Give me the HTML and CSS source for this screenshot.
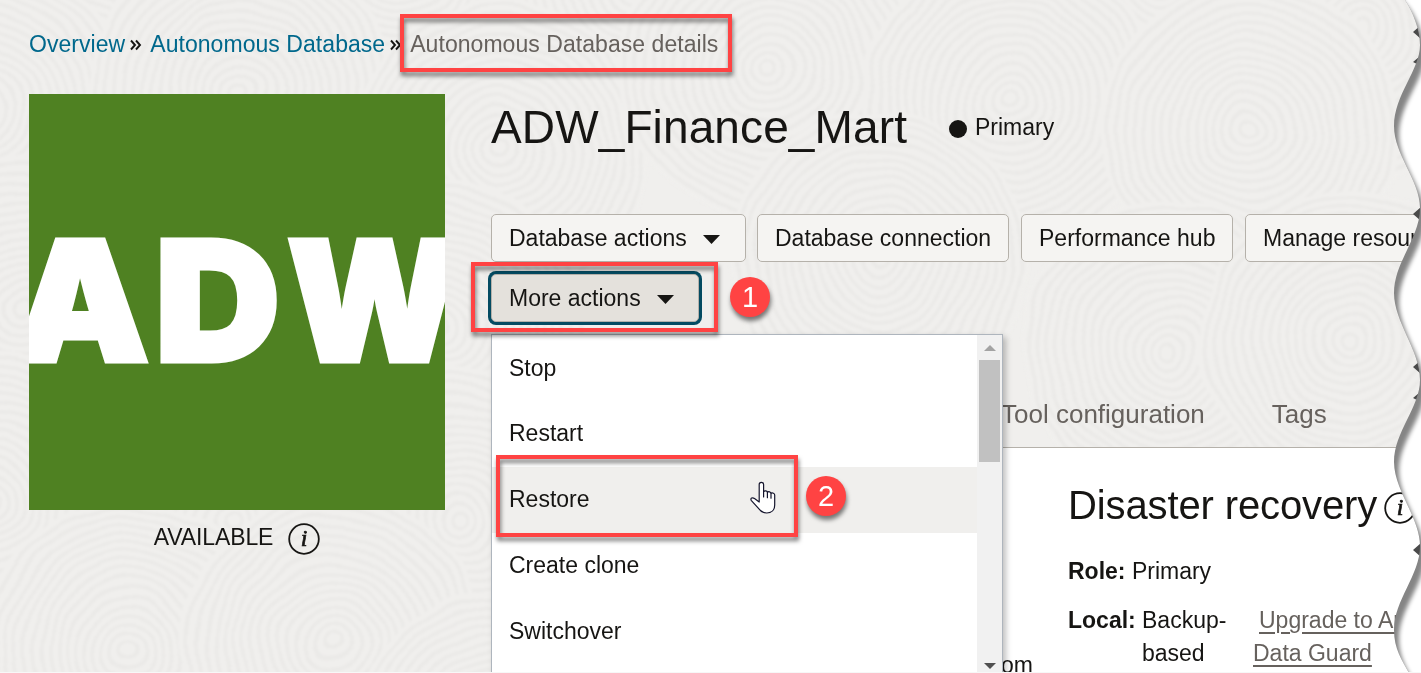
FILE: index.html
```html
<!DOCTYPE html>
<html lang="en">
<head>
<meta charset="utf-8">
<title>Autonomous Database details</title>
<link rel="stylesheet" href="styles.css">
</head>
<body>
<div class="page">
  <svg class="texture" width="1421" height="672" aria-hidden="true">
    <defs>
      <filter id="grain" x="0" y="0" width="100%" height="100%" color-interpolation-filters="sRGB">
        <feTurbulence type="fractalNoise" baseFrequency="0.015" numOctaves="2" seed="4"/>
        <feDisplacementMap in="SourceGraphic" scale="16" xChannelSelector="R" yChannelSelector="G"/>
        <feGaussianBlur stdDeviation="0.9"/>
      </filter>
      <g id="rings">
        <circle r="150" fill="#f0efed"/>
        <g fill="none" stroke="#ebeae8" stroke-width="3.500">
          <circle r="8"/><circle r="17"/><circle r="26"/><circle r="35"/><circle r="44"/><circle r="53"/><circle r="62"/><circle r="71"/><circle r="80"/><circle r="89"/><circle r="98"/><circle r="107"/><circle r="116"/><circle r="125"/><circle r="134"/><circle r="143"/>
        </g>
      </g>
    </defs>
    <g filter="url(#grain)">
    <use href="#rings" x="130" y="-75"/><use href="#rings" x="400" y="-40"/><use href="#rings" x="640" y="-20"/><use href="#rings" x="900" y="-60"/><use href="#rings" x="1160" y="-20"/><use href="#rings" x="1360" y="30"/>
    <use href="#rings" x="-20" y="110"/><use href="#rings" x="240" y="90"/><use href="#rings" x="500" y="150"/><use href="#rings" x="770" y="70"/><use href="#rings" x="1010" y="100"/><use href="#rings" x="1250" y="130"/>
    <use href="#rings" x="20" y="310"/><use href="#rings" x="440" y="330"/><use href="#rings" x="880" y="260"/><use href="#rings" x="1170" y="350"/><use href="#rings" x="1350" y="340"/>
    <use href="#rings" x="-10" y="500"/><use href="#rings" x="460" y="520"/><use href="#rings" x="230" y="520"/><use href="#rings" x="130" y="650"/><use href="#rings" x="332" y="643"/><use href="#rings" x="500" y="740"/>
    </g>
  </svg>

  <nav class="breadcrumb">
    <a>Overview</a>
    <svg class="sep" width="12" height="12" viewBox="0 0 12 12"><path d="M1 1.500 5 6 1 10.500M6 1.500 10 6 6 10.500"/></svg>
    <a>Autonomous Database</a>
    <svg class="sep sep-last" width="12" height="12" viewBox="0 0 12 12"><path d="M1 1.500 5 6 1 10.500M6 1.500 10 6 6 10.500"/></svg>
    <span class="current">Autonomous Database details</span>
  </nav>

  <div class="body">
    <aside class="side">
      <svg class="logo" width="416" height="416" viewBox="0 0 416 416">
        <rect width="416" height="416" fill="#4f8122"/>
        <text x="-16" y="266.500" textLength="136" lengthAdjust="spacingAndGlyphs">A</text>
        <text x="126" y="266.500" textLength="125" lengthAdjust="spacingAndGlyphs">D</text>
        <text x="258" y="266.500" textLength="175" lengthAdjust="spacingAndGlyphs">W</text>
      </svg>
      <div class="status">
        <span>AVAILABLE</span>
        <svg class="info" width="32" height="32" viewBox="0 0 32 32"><circle cx="16" cy="16" r="14.800"/><text x="16" y="23">i</text></svg>
      </div>
    </aside>

    <main class="main">
      <header class="title-row">
        <h1>ADW_Finance_Mart</h1>
        <span class="role-dot"></span>
        <span>Primary</span>
      </header>
      <div class="toolbar">
        <button class="btn w-actions">Database actions<svg width="17" height="9"><path d="M0 0h17L8.500 9z"/></svg></button>
        <button class="btn w-connection">Database connection</button>
        <button class="btn w-hub">Performance hub</button>
        <button class="btn w-manage">Manage resource allocation</button>
        <button class="btn w-more">More actions<svg width="17" height="9"><path d="M0 0h17L8.500 9z"/></svg></button>
      </div>
      <div class="tabs"><span>Tool configuration</span><span>Tags</span></div>
      <section class="panel">
        <div class="clipped-text">om</div>
        <div class="recovery">
          <h2>Disaster recovery
            <svg class="info" width="32" height="32" viewBox="0 0 32 32"><circle cx="16" cy="16" r="14.800"/><text x="16" y="23">i</text></svg>
          </h2>
          <p class="role"><b>Role:</b> Primary</p>
          <div class="local">
            <b>Local:</b>
            <span>Backup-<br>based</span>
            <a><span class="indent">Upgrade to Autonomous</span><br>Data Guard</a>
          </div>
        </div>
      </section>
    </main>
  </div>

  <div class="menu">
    <ul>
      <li>Stop</li>
      <li>Restart</li>
      <li class="hover">Restore</li>
      <li>Create clone</li>
      <li>Switchover</li>
    </ul>
    <div class="scrollbar">
      <svg width="12" height="6"><path d="M0 6h12L6 0z" fill="#a3a3a3"/></svg>
      <div class="thumb"></div>
      <svg class="down" width="12" height="6"><path d="M0 0h12L6 6z" fill="#505050"/></svg>
    </div>
  </div>

  <div class="mark mark-crumb"></div>
  <div class="mark mark-more"></div>
  <div class="mark mark-restore"></div>
  <div class="badge badge-1">1</div>
  <div class="badge badge-2">2</div>

  <svg class="cursor" width="28" height="34" viewBox="0 0 28 34">
    <path d="M9.200 19V3.600a2.200 2.200 0 0 1 4.400 0V10.500c1-1.200 3.400-.8 3.800.7 1.200-.9 3.200-.5 3.600 1 1.500-.7 3.700 0 3.700 1.900V24c0 5-3.300 8-7.900 8-4 0-6.300-1.700-8.300-4.600L1.200 19.300c-1.100-2.200 1.200-3.200 3.300-1.700L9.200 21z"/>
    <path d="M13.600 10.500v5.500M17.400 11.200v5.500M21 12.200v5"/>
  </svg>

  <svg class="torn" width="31" height="673" viewBox="1390 0 31 673">
    <defs>
      <path id="wave" d="M1405 0C1413 12 1420 30 1420 45C1420 70 1394 95 1394 126C1394 155 1420 180 1420 208C1420 238 1394 262 1394 293C1394 322 1420 350 1420 380C1420 407 1394 432 1394 462C1394 490 1420 518 1420 546C1420 575 1394 600 1394 630C1394 649 1402 660 1409 673H1460V-30H1380z"/>
      <clipPath id="tear"><use href="#wave"/></clipPath>
      <filter id="soft" x="-50%" y="-5%" width="200%" height="110%"><feGaussianBlur stdDeviation="2.2"/></filter>
    </defs>
    <path fill="#4a4a4a" d="M1413 32l8-7v14zM1413 62l6-5v8zM1413 214l8-7v14zM1413 367l8-7v14zM1413 398l6-5v8zM1413 550l8-7v14z"/>
    <g clip-path="url(#tear)">
      <rect x="1380" y="0" width="60" height="673" fill="#858585"/>
      <use href="#wave" fill="#fff" filter="url(#soft)" transform="translate(5 9)"/>
    </g>
  </svg>
</div>
</body>
</html>
```
FILE: styles.css
```css
* { box-sizing: border-box; }
body {
  margin: 0;
  background: #f7f7f7;
  color: #161513;
  font: 23px/33px "Liberation Sans", Arial, sans-serif;
}
h1, h2, p, ul { margin: 0; padding: 0; font-weight: 400; }
.page {
  position: relative;
  width: 1421px;
  height: 672px;
  overflow: hidden;
  background: #f0efed;
}
.texture { position: absolute; left: 0; top: 0; }

.breadcrumb {
  position: relative;
  display: flex;
  align-items: center;
  height: 94px;
  padding: 0 0 6px 29px;
  color: #00688c;
  white-space: nowrap;
  letter-spacing: 0.05px;
}
.sep { margin: 2px 8px 0 5px; fill: none; stroke: #161513; stroke-width: 1.9; }
.current { color: #66615d; }

.body { position: relative; display: flex; height: 578px; }
.side { flex: none; width: 416px; margin-left: 29px; }
.logo { display: block; }
.logo text {
  font: 900 167px Inter, sans-serif;
  fill: #fff;
  stroke: #fff;
  stroke-width: 5;
}
.status {
  display: flex;
  justify-content: center;
  gap: 15px;
  padding-top: 11px;
}
.info { flex: none; margin-top: 2px; fill: none; stroke: #161513; stroke-width: 1.8; }
.info text {
  font: italic 400 24px "Liberation Serif", serif;
  fill: #161513;
  stroke-width: 0.7;
  text-anchor: middle;
}
.status > span { letter-spacing: -0.1px; }

.main { flex: none; display: flex; flex-direction: column; width: 930px; margin-left: 46px; }
.title-row, .toolbar, .tabs { flex: none; }
.title-row { display: flex; align-items: center; height: 66px; }
.title-row h1 { font-size: 46px; line-height: 60px; width: 458px; letter-spacing: 0.12px; }
.role-dot { width: 18px; height: 18px; margin: 4px 8px 0 0; border-radius: 50%; background: #161513; }

.toolbar { display: flex; flex-wrap: wrap; gap: 12px; width: 1100px; margin-top: 54px; }
.btn {
  display: flex;
  align-items: center;
  height: 48px;
  padding: 0 17px;
  border: 1px solid #b5b1aa;
  border-radius: 5px;
  background: #f5f4f2;
  color: #161513;
  font: inherit;
  white-space: nowrap;
  overflow: hidden;
}
.btn svg { margin: 2px 0 0 16px; fill: #161513; }
.w-actions { width: 255px; margin-right: -1px; }
.w-connection { width: 252px; }
.w-hub { width: 212px; }
.w-manage { width: 320px; }
.w-more {
  width: 208px;
  background: #e4e1dc;
  box-shadow: 0 0 0 3px #044b62;
}

.tabs {
  display: flex;
  gap: 67px;
  height: 125px;
  padding: 76px 0 0 510px;
  color: #66615d;
  font-size: 26px;
}
.panel {
  flex: 1;
  min-height: 0;
  display: flex;
  border-top: 1px solid #b5b1aa;
  background: #fff;
}
.clipped-text { flex: none; width: 577px; padding: 201px 0 0 510px; }
.recovery { flex: none; white-space: nowrap; }
.recovery h2 { display: flex; gap: 7px; padding-top: 32px; height: 107px; font-size: 40px; line-height: 50px; letter-spacing: -0.12px; }
.recovery h2 .info { margin-top: 12px; }
.local { display: flex; margin-top: 16px; }
.local > span { width: 111px; margin-left: 7px; }
.local b { width: 67px; }
.local a { color: #66615d; text-decoration: underline; text-underline-offset: 4px; text-decoration-thickness: 2px; }
.indent { margin-left: 6px; }

.menu {
  position: absolute;
  left: 491px;
  top: 334px;
  display: flex;
  width: 512px;
  height: 345px;
  border: 1px solid #aeb5bd;
  background: #fff;
  box-shadow: 3px 3px 6px rgba(0, 0, 0, .25);
}
.menu ul { flex: 1; list-style: none; }
.menu li { height: 66px; padding-left: 17px; line-height: 64px; }
.menu li:first-child { line-height: 66px; }
.menu .hover { background: #f0efed; }
.scrollbar {
  display: flex;
  flex-direction: column;
  align-items: center;
  width: 25px;
  height: 338px;
  padding-top: 10px;
  background: #f1f1f1;
}
.thumb { width: 21px; height: 102px; margin-top: 9px; background: #c1c1c1; }
.scrollbar .down { margin-top: auto; margin-bottom: 4px; }

.mark {
  position: absolute;
  border: 4px solid #ff4343;
  filter: drop-shadow(1px 4px 2px rgba(0, 0, 0, .5));
}
.mark-crumb { left: 400px; top: 14px; width: 332px; height: 58px; }
.mark-more { left: 471px; top: 262px; width: 247px; height: 70px; }
.mark-restore { left: 496px; top: 455px; width: 302px; height: 82px; }
.badge {
  position: absolute;
  width: 40px;
  height: 40px;
  border-radius: 50%;
  background: #ff4343;
  color: #fff;
  font-size: 29px;
  line-height: 41px;
  text-align: center;
  box-shadow: 1px 4px 4px rgba(0, 0, 0, .5);
}
.badge-1 { left: 730px; top: 277px; }
.badge-2 { left: 806px; top: 476px; }
.cursor { position: absolute; left: 750px; top: 481px; fill: #fff; stroke: #14142c; stroke-width: 1.2; stroke-linejoin: round; stroke-linecap: round; }
.torn { position: absolute; left: 1390px; top: 0; }
```
